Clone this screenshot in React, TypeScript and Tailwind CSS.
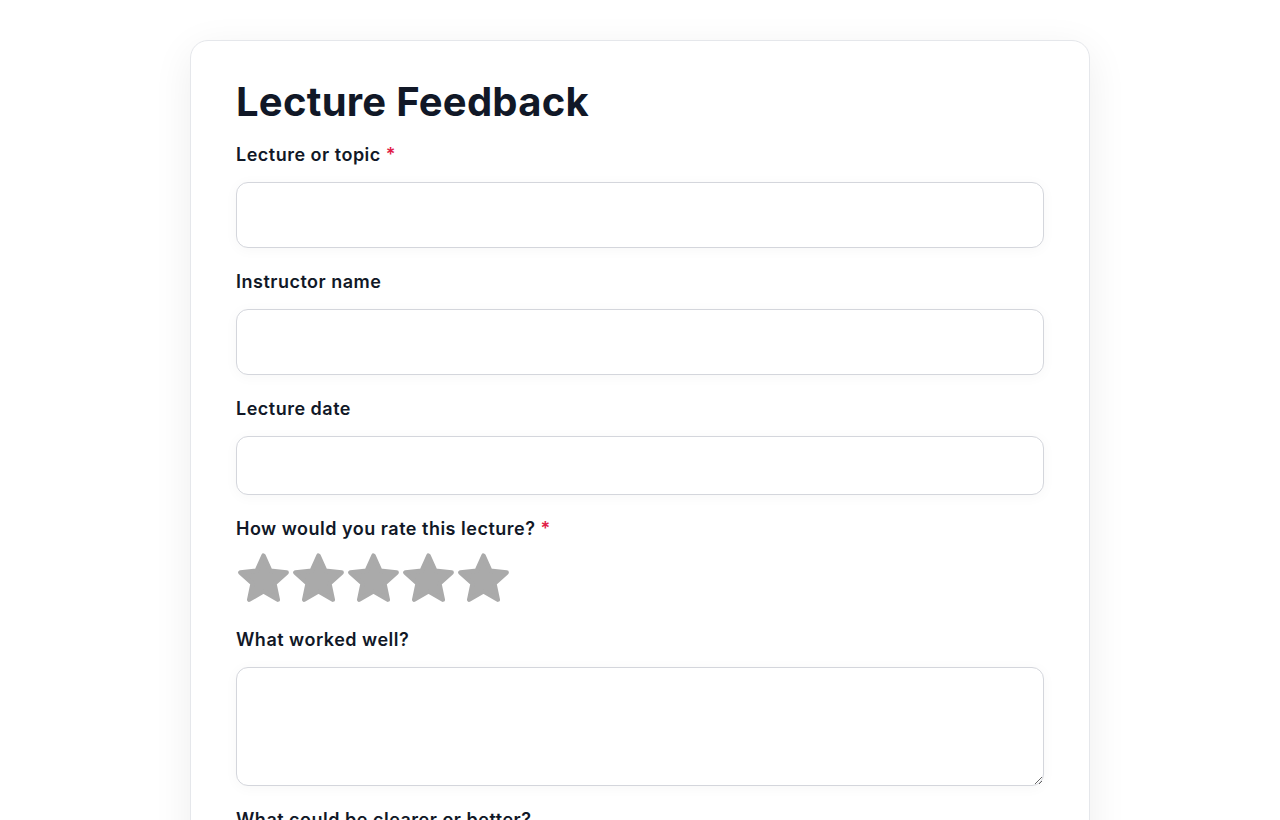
import React from "react";

function Star() {
  const cx = 27.5;
  const R = 24.3;
  const r = 24.3 * 0.47;
  const cy = 27;
  const pts: string[] = [];
  for (let i = 0; i < 10; i++) {
    const rad = i % 2 === 0 ? R : r;
    const a = (-90 + i * 36) * (Math.PI / 180);
    pts.push(`${(cx + rad * Math.cos(a)).toFixed(2)},${(cy + rad * Math.sin(a)).toFixed(2)}`);
  }
  return (
    <svg width="55" height="52" viewBox="0 0 55 52">
      <polygon points={pts.join(" ")} fill="#aaaaaa" stroke="#aaaaaa" strokeWidth="4.5" strokeLinejoin="round" />
    </svg>
  );
}

function Label({ text, required }: { text: string; required?: boolean }) {
  return (
    <label className="block text-[18px] leading-[27px] font-semibold tracking-[0.5px] text-[#111827] mb-[14px]">
      {text}
      {required && <span className="text-[#e11d48] ml-[5px]">*</span>}
    </label>
  );
}

const inputCls =
  "block w-full rounded-[12px] border border-[#d4d6dc] bg-white px-4 text-[16px] outline-none shadow-[0_2px_14px_rgba(0,0,0,0.035)]";

export default function App() {
  return (
    <div className="min-h-screen bg-white font-['Inter',sans-serif] pt-[40px]">
      <div className="mx-auto w-[900px] rounded-[18px] border border-[#e5e7eb] bg-white px-[45px] pt-[37px] pb-10 shadow-[0_10px_40px_rgba(0,0,0,0.07)]">
        <h1 className="text-[40px] leading-[48px] font-bold tracking-[0.25px] text-[#111827] mb-[15px]">
          Lecture Feedback
        </h1>
        <div className="flex flex-col gap-[20px]">
          <div>
            <Label text="Lecture or topic" required />
            <input type="text" className={`${inputCls} h-[66px]`} />
          </div>
          <div>
            <Label text="Instructor name" />
            <input type="text" className={`${inputCls} h-[66px]`} />
          </div>
          <div>
            <Label text="Lecture date" />
            <input type="text" className={`${inputCls} h-[59px]`} />
          </div>
          <div>
            <Label text="How would you rate this lecture?" required />
            <div className="flex -mt-[3px] pb-[1px]">
              {[0, 1, 2, 3, 4].map((i) => (
                <button key={i} type="button" className="p-0 m-0 bg-transparent border-0">
                  <Star />
                </button>
              ))}
            </div>
          </div>
          <div>
            <Label text="What worked well?" />
            <textarea className={`${inputCls} h-[119px] py-3 resize-y`} />
          </div>
          <div>
            <Label text="What could be clearer or better?" />
            <textarea className={`${inputCls} h-[119px] py-3 resize-y`} />
          </div>
        </div>
      </div>
    </div>
  );
}
